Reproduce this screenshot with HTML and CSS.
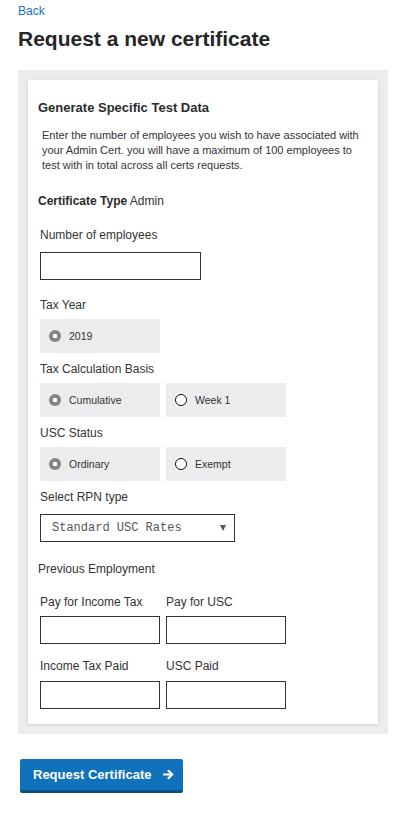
FILE: index.html
```html
<!DOCTYPE html>
<html lang="en">
<head>
<meta charset="utf-8">
<title>Request a new certificate</title>
<link rel="stylesheet" href="styles.css">
</head>
<body>
<a class="back" href="#">Back</a>
<h1 class="page-title">Request a new certificate</h1>

<div class="panel">
  <div class="card">
    <h2 class="card-title">Generate Specific Test Data</h2>
    <p class="intro">Enter the number of employees you wish to have associated with your Admin Cert. you will have a maximum of 100 employees to test with in total across all certs requests.</p>
    <div class="cert-type"><strong>Certificate Type</strong> Admin</div>

    <div class="field field-first">
      <div class="label">Number of employees</div>
      <div class="text-input wide gap-lg"></div>
    </div>

    <div class="field field-spaced">
      <div class="label">Tax Year</div>
      <div class="options">
        <div class="option"><span class="radio checked"></span><span class="opt-text">2019</span></div>
      </div>
    </div>

    <div class="field">
      <div class="label">Tax Calculation Basis</div>
      <div class="options">
        <div class="option"><span class="radio checked"></span><span class="opt-text">Cumulative</span></div>
        <div class="option"><span class="radio"></span><span class="opt-text">Week 1</span></div>
      </div>
    </div>

    <div class="field">
      <div class="label">USC Status</div>
      <div class="options">
        <div class="option"><span class="radio checked"></span><span class="opt-text">Ordinary</span></div>
        <div class="option"><span class="radio"></span><span class="opt-text">Exempt</span></div>
      </div>
    </div>

    <div class="field">
      <div class="label">Select RPN type</div>
      <div class="select gap-lg"><span class="select-text">Standard USC Rates</span><span class="caret"></span></div>
    </div>

    <div class="section-label">Previous Employment</div>

    <div class="pair pair-first">
      <div class="pair-cell">
        <div class="label">Pay for Income Tax</div>
        <div class="text-input"></div>
      </div>
      <div class="pair-cell">
        <div class="label">Pay for USC</div>
        <div class="text-input"></div>
      </div>
    </div>

    <div class="pair pair-second">
      <div class="pair-cell">
        <div class="label">Income Tax Paid</div>
        <div class="text-input gap-md"></div>
      </div>
      <div class="pair-cell">
        <div class="label">USC Paid</div>
        <div class="text-input gap-md"></div>
      </div>
    </div>
  </div>
</div>

<button class="submit" type="button">Request Certificate
  <svg class="arrow" width="11" height="11" viewBox="0 0 11 11" aria-hidden="true"><path d="M1 5.5H9M5.5 1.8L9.2 5.5L5.5 9.2" fill="none" stroke="#fff" stroke-width="2.2" stroke-linecap="round" stroke-linejoin="round"/></svg>
</button>
</body>
</html>
```

FILE: styles.css
```css
html, body {
  margin: 0;
  background: #fff;
}
body {
  padding: 4px 0 0 18px;
  font-family: "Liberation Sans", Arial, sans-serif;
  color: #333;
}
.back {
  display: block;
  font-size: 12px;
  line-height: 14px;
  color: #1a6fbf;
  text-decoration: none;
  width: max-content;
}
.page-title {
  margin: 9px 0 0;
  font-size: 21px;
  line-height: 24px;
  font-weight: bold;
  color: #262626;
}
.panel {
  margin-top: 19px;
  width: 370px;
  box-sizing: border-box;
  padding: 10px;
  background: #ebecee;
}
.card {
  background: #fff;
  padding: 20px 10px 15px;
  box-shadow: 0 1px 3px rgba(0, 0, 0, 0.14);
  display: flex;
  flex-direction: column;
}
.card-title {
  margin: 0;
  font-size: 13px;
  line-height: 16px;
  font-weight: bold;
  color: #2b2b2b;
}
.intro {
  margin: 12px 0 0 4px;
  width: 326px;
  font-size: 11px;
  line-height: 15px;
  color: #333;
}
.cert-type {
  margin-top: 21px;
  font-size: 12px;
  line-height: 14px;
  color: #333;
}
.cert-type strong {
  color: #2b2b2b;
}
.field {
  margin: 9px 0 0 2px;
  display: flex;
  flex-direction: column;
}
.field-first {
  margin-top: 20px;
}
.field-spaced {
  margin-top: 18px;
}
.label {
  font-size: 12px;
  line-height: 14px;
  color: #333;
  white-space: nowrap;
}
.text-input {
  margin-top: 7px;
  width: 120px;
  height: 28px;
  box-sizing: border-box;
  border: 1px solid #333;
  background: #fff;
}
.text-input.wide {
  width: 161px;
}
.gap-lg {
  margin-top: 10px;
}
.gap-md {
  margin-top: 8px;
}
.options {
  margin-top: 7px;
  display: flex;
  gap: 6px;
}
.option {
  width: 120px;
  height: 34px;
  box-sizing: border-box;
  padding-left: 9px;
  background: #ebecee;
  display: flex;
  align-items: center;
  gap: 8px;
}
.radio {
  flex: none;
  width: 12px;
  height: 12px;
  box-sizing: border-box;
  border-radius: 50%;
  border: 1.5px solid #111;
  background: #fff;
}
.radio.checked {
  border: none;
  background: radial-gradient(circle, #fff 0 2px, #858585 2.6px);
}
.opt-text {
  font-size: 10.5px;
  line-height: 14px;
  color: #333;
}
.select {
  width: 195px;
  height: 28px;
  box-sizing: border-box;
  border: 1px solid #333;
  padding: 0 8px 0 11px;
  display: flex;
  align-items: center;
  justify-content: space-between;
}
.select-text {
  font-family: "Liberation Mono", "Courier New", monospace;
  font-size: 12px;
  color: #555;
}
.caret {
  width: 0;
  height: 0;
  border-left: 3px solid transparent;
  border-right: 3px solid transparent;
  border-top: 6px solid #555;
}
.section-label {
  margin-top: 20px;
  font-size: 12px;
  line-height: 14px;
  color: #333;
}
.pair {
  margin-left: 2px;
  display: grid;
  grid-template-columns: 120px 120px;
  column-gap: 6px;
}
.pair-first {
  margin-top: 19px;
}
.pair-second {
  margin-top: 15px;
}
.pair-cell {
  display: flex;
  flex-direction: column;
}
.submit {
  margin: 25px 0 0 2px;
  width: 163px;
  height: 34px;
  box-sizing: border-box;
  padding: 0 0 0 13px;
  border: none;
  border-bottom: 3px solid #0a4f80;
  border-radius: 2px;
  background: #0f72ba;
  color: #fff;
  font-family: "Liberation Sans", Arial, sans-serif;
  font-size: 13px;
  font-weight: bold;
  display: flex;
  align-items: center;
  gap: 12px;
  cursor: pointer;
}
.arrow {
  display: block;
}
```
